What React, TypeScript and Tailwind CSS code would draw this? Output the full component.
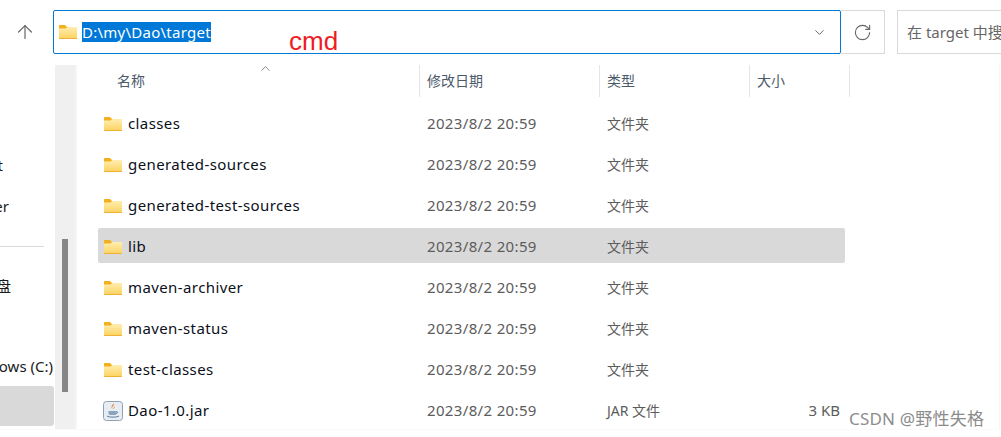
import { ArrowUp, ChevronDown, ChevronUp, RotateCw } from 'lucide-react';

const font = { fontFamily: '"Noto Sans", "Noto Sans CJK SC", sans-serif' };

interface FileRow {
  name: string;
  type: string;
  size?: string;
  selected?: boolean;
  jar?: boolean;
}

const rows: FileRow[] = [
  { name: 'classes', type: '文件夹' },
  { name: 'generated-sources', type: '文件夹' },
  { name: 'generated-test-sources', type: '文件夹' },
  { name: 'lib', type: '文件夹', selected: true },
  { name: 'maven-archiver', type: '文件夹' },
  { name: 'maven-status', type: '文件夹' },
  { name: 'test-classes', type: '文件夹' },
  { name: 'Dao-1.0.jar', type: 'JAR 文件', size: '3 KB', jar: true },
];

function FolderIcon() {
  return (
    <svg width="20" height="16" viewBox="0 0 20 16" className="shrink-0">
      <defs>
        <linearGradient id="folderFill" x1="0" y1="0" x2="0" y2="1">
          <stop offset="0" stopColor="#ffeeb0" />
          <stop offset="1" stopColor="#fcd25f" />
        </linearGradient>
      </defs>
      <path d="M1 2C1 1.400 1.400 1 2 1h5l2 2h9.500c.3 0 .5.2.5.5V5H1z" fill="#f2b01e" />
      <path d="M1 4.500h6.500L9.500 3H19v11.200c0 .5-.3.8-.8.8H1.800c-.5 0-.8-.3-.8-.8z" fill="url(#folderFill)" />
      <path d="M1 14h18v.3c0 .4-.3.7-.8.7H1.800c-.5 0-.8-.3-.8-.7z" fill="#eeb136" />
    </svg>
  );
}

function JarIcon() {
  return (
    <svg width="20" height="20" viewBox="0 0 20 20" className="shrink-0">
      <rect x="0.500" y="0.500" width="19" height="19" rx="3" fill="#e8edf3" stroke="#8fa0b5" />
      <path d="M10.500 2.500c1.500 2-2.500 3-1 5.500-2-1.500-.5-3.500 1-5.500zM12 5c0 1.500-1.500 2-1 3.500-1.200-1 .2-2.500 1-3.500z" fill="#e2762b" />
      <path d="M5.500 10h8v2.500c0 1-1 1.500-4 1.500s-4-.5-4-1.500z" fill="#8aa3bf" />
      <path d="M13.500 10.500c1.500 0 1.500 2-.5 2M4 15c2 1.500 10 1.500 12 0" fill="none" stroke="#5a7a9e" strokeWidth="1" />
    </svg>
  );
}

function HeaderCell({ label, className }: { label: string; className: string }) {
  return (
    <div className={`flex h-[32px] items-center border-r border-[#e5e5e5] pb-[2px] text-[14px] text-[#4c5a6a] ${className}`}>
      {label}
    </div>
  );
}

function SideLabel({ text, width, className }: { text: string; width: string; className: string }) {
  return (
    <div className={`flex justify-end overflow-hidden whitespace-nowrap text-[15px] leading-[20px] text-[#1a1a1a] ${width} ${className}`}>
      <span className="shrink-0">{text}</span>
    </div>
  );
}

export default function App() {
  return (
    <div className="relative h-[437px] w-[1001px] overflow-hidden bg-white" style={font}>
      {/* Address bar */}
      <div className="flex h-[65px] items-start pt-[10px]">
        <div className="flex h-[44px] w-[53px] items-center justify-center pr-[3px] text-[#666]">
          <ArrowUp size={22} strokeWidth={1.3} />
        </div>
        <div className="flex h-[44px] w-[788px] items-center rounded-[2px] border border-[#0078d4] pl-[4px] pr-[13px]">
          <FolderIcon />
          <span className="ml-[4px] bg-[#0078d7] text-[15px] leading-[20px] tracking-[0.25px] text-white">D:\my\Dao\target</span>
          <ChevronDown size={15} strokeWidth={1.4} className="ml-auto text-[#555]" />
        </div>
        <div className="flex h-[44px] w-[44px] items-center justify-center border border-l-0 border-[#d9d9d9] text-[#666]">
          <RotateCw size={19} strokeWidth={1.4} />
        </div>
        <div className="ml-[12px] flex h-[44px] flex-1 items-center overflow-hidden whitespace-nowrap border border-r-0 border-[#d9d9d9] pl-[9px] text-[15px] text-[#666]">
          在 target 中搜索
        </div>
      </div>

      <div className="flex h-[365px] border-b border-[#fafafa]">
        {/* Navigation pane, cut off on the left */}
        <div className="flex w-[55px] shrink-0 flex-col">
          <SideLabel text="t" width="w-[3px]" className="mt-[90px]" />
          <SideLabel text="er" width="w-[9px]" className="mt-[21px]" />
          <div className="mt-[30px] h-px w-[44px] bg-[#d9d9d9]" />
          <SideLabel text="盘" width="w-[11px]" className="mt-[29px]" />
          <SideLabel text="Windows (C:)" width="w-[53px]" className="mt-[60px]" />
          <div className="mt-[10px] h-[40px] w-[54px] rounded-r-[3px] bg-[#d9d9d9]" />
        </div>

        {/* Nav scrollbar */}
        <div className="w-[20px] shrink-0 bg-[#f0f0f0] pl-[7px] pt-[174px]">
          <div className="h-[153px] w-[6px] bg-[#868686]" />
        </div>

        {/* File list */}
        <div className="relative flex-1 border-l-2 border-[#f5f5f5]">
          <ChevronUp size={15} strokeWidth={1.2} className="absolute left-[181px] top-[-4px] text-[#666]" />
          <div className="flex">
            <HeaderCell label="名称" className="w-[343px] pl-[40px]" />
            <HeaderCell label="修改日期" className="w-[180px] pl-[7px]" />
            <HeaderCell label="类型" className="w-[150px] pl-[7px]" />
            <HeaderCell label="大小" className="w-[100px] pl-[7px]" />
          </div>
          <div className="ml-[21px] mt-[8px] flex w-[747px] flex-col">
            {rows.map((row) => (
              <div
                key={row.name}
                className={`mb-[6px] flex h-[35px] items-center rounded-[2px] pt-[2px] ${row.selected ? 'bg-[#d9d9d9]' : ''}`}
              >
                <div className="flex w-[329px] items-center pl-[5px]">
                  {row.jar ? <JarIcon /> : <FolderIcon />}
                  <span className="ml-[5px] text-[15px] tracking-[0.4px] text-[#0a0f1a]">{row.name}</span>
                </div>
                <span className="w-[180px] text-[15px] tracking-[0.35px] text-[#5c5c5c]">2023/8/2 20:59</span>
                <span className="w-[150px] text-[14px] text-[#5c5c5c]">{row.type}</span>
                <span className="w-[83px] text-right text-[15px] text-[#5c5c5c]">{row.size}</span>
              </div>
            ))}
          </div>
          <div className="absolute right-[1px] top-0 h-full w-px bg-[#f5f5f5]" />
        </div>
      </div>

      {/* Hand-written note on the screenshot */}
      <div className="absolute left-[289px] top-[25px] text-[26px] leading-[32px] text-[#ee1c25]" style={{ fontFamily: '"Liberation Sans", sans-serif' }}>
        cmd
      </div>
      {/* Watermark */}
      <div className="absolute left-[849px] top-[407px] text-[17px] leading-[24px] tracking-[0.2px] text-[#8c8c8c]">CSDN @野性失格</div>
    </div>
  );
}
